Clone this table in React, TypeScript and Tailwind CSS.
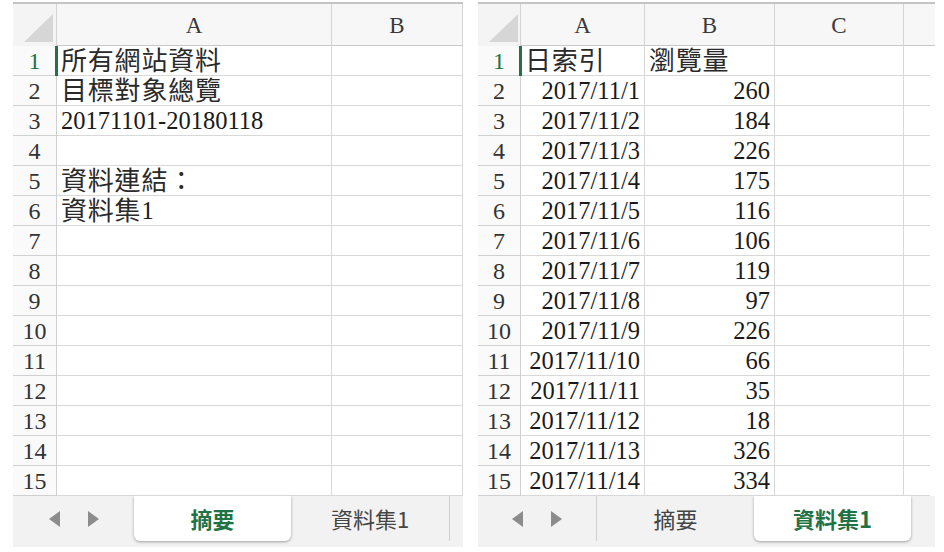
import React from "react";

type Cell = { text: string; align?: "left" | "right" };

interface SheetProps {
  cols: number[];
  headers: string[];
  rows: Cell[][];
  tabs: string[];
  active: number;
  arrowsWidth: number;
  tabWidth: number;
  arrowDivider: boolean;
  barWidth: number;
  lastOpen?: boolean;
}

const serif = { fontFamily: '"Liberation Serif", "Noto Sans CJK TC", serif' };
const sans = { fontFamily: '"Noto Sans CJK TC", "Noto Sans", sans-serif' };

function hasCjk(s: string) {
  return /[\u3000-\u9fff\uff00-\uffef]/.test(s);
}

function CellText({ text }: { text: string }) {
  // CJK glyphs run a little wider than the latin digits in the reference
  const parts = text.split(/([\u3000-\u9fff\uff00-\uffef]+)/).filter(Boolean);
  return (
    <>
      {parts.map((p, i) =>
        hasCjk(p) ? (
          <span key={i} className="text-[26px] tracking-[0.8px] text-[#2a2a2a]">
            {p}
          </span>
        ) : (
          <span key={i}>{p}</span>
        )
      )}
    </>
  );
}

function Corner() {
  return (
    <svg width="44" height="42" viewBox="0 0 44 42" className="block">
      <polygon points="40,10 40,38 11,38" fill="#d6d6d6" />
    </svg>
  );
}

function Arrows() {
  return (
    <div className="flex items-center gap-[28px]">
      <svg width="11" height="16" viewBox="0 0 11 16">
        <polygon points="11,0 11,16 0,8" fill="#8c8c8c" />
      </svg>
      <svg width="11" height="16" viewBox="0 0 11 16">
        <polygon points="0,0 0,16 11,8" fill="#8c8c8c" />
      </svg>
    </div>
  );
}

function Sheet({
  cols,
  headers,
  rows,
  tabs,
  active,
  arrowsWidth,
  tabWidth,
  arrowDivider,
  barWidth,
  lastOpen,
}: SheetProps) {
  const template = cols.map((c) => `${c}px`).join(" ");
  return (
    <div className="flex flex-col" style={serif}>
      <div className="mt-[2px] border-t-2 border-[#c4c4c4]">
        <div className="grid h-[42px] bg-[#f7f7f7] border-b border-[#c8c8c8]" style={{ gridTemplateColumns: template }}>
          <div className="border-r border-[#d4d4d4] bg-[#f4f4f4]">
            <Corner />
          </div>
          {headers.map((h, i) => (
            <div
              key={i}
              className={`flex items-center justify-center pt-[2px] text-[23px] text-[#3a3a3a] ${
                lastOpen && i === headers.length - 1 ? "" : "border-r border-[#d4d4d4]"
              }`}
            >
              {h}
            </div>
          ))}
        </div>
        {rows.map((row, r) => (
          <div key={r} className="grid h-[30px]" style={{ gridTemplateColumns: template }}>
            <div
              className={`flex items-center justify-center border-b border-r border-[#d0d0d0] bg-[#fafafa] text-[24px] leading-none ${
                r === 0 ? "text-[#217346]" : "text-[#333]"
              }`}
            >
              {r + 1}
            </div>
            {row.map((cell, c) => (
              <div
                key={c}
                className={`relative flex items-center overflow-visible whitespace-nowrap border-b border-[#d8d8d8] px-[4px] pt-[2px] text-[24.5px] leading-none text-[#1a1a1a] ${
                  lastOpen && c === row.length - 1 ? "" : "border-r"
                } ${cell.align === "right" ? "justify-end" : "justify-start"}`}
              >
                {r === 0 && c === 0 && (
                  <span className="absolute left-[-2px] top-0 h-[30px] w-[3px] bg-[#217346]" />
                )}
                <CellText text={cell.text} />
              </div>
            ))}
          </div>
        ))}
      </div>
      <div className="flex h-[51px] items-start bg-[#f2f2f2]" style={{ ...sans, width: barWidth }}>
        <div
          className={`flex h-[45px] items-center justify-center ${arrowDivider ? "border-r border-[#cfcfcf]" : ""}`}
          style={{ width: arrowsWidth }}
        >
          <Arrows />
        </div>
        {tabs.map((t, i) =>
          i === active ? (
            <div
              key={i}
              className="flex h-[45px] items-center justify-center rounded-b-[6px] bg-white text-[22px] font-bold text-[#217346] shadow-[0_1px_3px_rgba(0,0,0,0.35)]"
              style={{ width: tabWidth }}
            >
              {t}
            </div>
          ) : (
            <div
              key={i}
              className={`flex h-[45px] items-center justify-center text-[22px] text-[#444] ${
                i === tabs.length - 1 ? "border-r border-[#cfcfcf]" : ""
              }`}
              style={{ width: i === tabs.length - 1 ? tabWidth + 2 : tabWidth }}
            >
              {t}
            </div>
          )
        )}
      </div>
    </div>
  );
}

const leftRows: Cell[][] = [
  [{ text: "所有網站資料" }, { text: "" }],
  [{ text: "目標對象總覽" }, { text: "" }],
  [{ text: "20171101-20180118" }, { text: "" }],
  [{ text: "" }, { text: "" }],
  [{ text: "資料連結：" }, { text: "" }],
  [{ text: "資料集1" }, { text: "" }],
  ...Array.from({ length: 9 }, () => [{ text: "" }, { text: "" }]),
];

const data: [string, string][] = [
  ["2017/11/1", "260"],
  ["2017/11/2", "184"],
  ["2017/11/3", "226"],
  ["2017/11/4", "175"],
  ["2017/11/5", "116"],
  ["2017/11/6", "106"],
  ["2017/11/7", "119"],
  ["2017/11/8", "97"],
  ["2017/11/9", "226"],
  ["2017/11/10", "66"],
  ["2017/11/11", "35"],
  ["2017/11/12", "18"],
  ["2017/11/13", "326"],
  ["2017/11/14", "334"],
];

const rightRows: Cell[][] = [
  [{ text: "日索引" }, { text: "瀏覽量" }, { text: "" }, { text: "" }],
  ...data.map(([d, v]) => [
    { text: d, align: "right" as const },
    { text: v, align: "right" as const },
    { text: "" },
    { text: "" },
  ]),
];

export default function App() {
  return (
    <div className="flex h-[552px] w-[944px] gap-[15px] overflow-hidden bg-white pl-[13px]">
      <Sheet
        cols={[44, 275, 131]}
        headers={["A", "B"]}
        rows={leftRows}
        tabs={["摘要", "資料集1"]}
        active={0}
        arrowsWidth={121}
        tabWidth={157}
        arrowDivider={false}
        barWidth={450}
      />
      <Sheet
        cols={[43, 124, 130, 129, 26]}
        headers={["A", "B", "C", ""]}
        rows={rightRows}
        tabs={["摘要", "資料集1"]}
        active={1}
        arrowsWidth={119}
        tabWidth={157}
        arrowDivider={true}
        barWidth={457}
        lastOpen
      />
    </div>
  );
}
